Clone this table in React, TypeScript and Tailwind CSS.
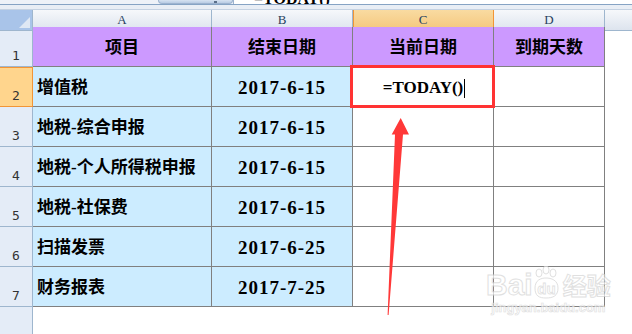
import React from 'react';

const cjk = '[font-family:"Liberation_Serif","Noto_Sans_CJK_SC",serif]';

const rows = [
  { name: '增值税', date: '2017-6-15' },
  { name: '地税-综合申报', date: '2017-6-15' },
  { name: '地税-个人所得税申报', date: '2017-6-15' },
  { name: '地税-社保费', date: '2017-6-15' },
  { name: '扫描发票', date: '2017-6-25' },
  { name: '财务报表', date: '2017-7-25' },
];

const gridCols = 'grid grid-cols-[33px_179px_141px_141px_111px_1fr]';

function RowHead({ n, active }: { n: number; active?: boolean }) {
  return (
    <div
      className={
        active
          ? 'flex items-end justify-center pb-[1px] bg-[#ffd58d] border-r border-b border-[#f29536] shadow-[inset_0_1px_0_#f29536] text-[13px] text-[#333] [font-family:"DejaVu_Sans_Mono",monospace]'
          : 'flex items-end justify-center pb-[1px] bg-[#e4ecf7] border-r border-b border-[#9eb6ce] text-[13px] text-[#333] [font-family:"DejaVu_Sans_Mono",monospace]'
      }
    >
      {n}
    </div>
  );
}

export default function App() {
  return (
    <div className="relative w-[632px] h-[334px] overflow-hidden bg-white">
      {/* formula bar remains */}
      <div className="flex h-[4px] bg-[#eef2f8] overflow-hidden">
        <div className="w-[158px]" />
        <div className="relative w-[75px] rounded-b-[6px] bg-gradient-to-b from-[#d6e2f1] to-[#b9cce4] border-x border-b border-[#9db3cf]">
          <div className="absolute left-[55px] bottom-0 w-[3px] h-[2px] bg-[#5a6f8a]" />
        </div>
        <div className="relative flex-1 overflow-hidden bg-white border-l border-[#9db3cf]">
          <div className={`absolute left-[20px] bottom-[0px] h-[16px] leading-[16px] text-[16px] font-bold text-black ${cjk}`}>
            <span className="relative top-[3px]">=TODAY()</span>
          </div>
        </div>
      </div>
      <div className="h-px bg-[#86a3c4]" />
      <div className="h-[4px] bg-[#e9eef5]" />

      {/* column headers */}
      <div className={`${gridCols} h-[18px] border-t border-[#c5d2e2]`}>
        <div className="relative bg-[#a9c4e9] border-r border-b border-[#9eb6ce]">
          <div className="absolute right-[2px] bottom-[2px] w-0 h-0 border-l-[11px] border-l-transparent border-b-[11px] border-b-[#dfe8f4]" />
        </div>
        {['A', 'B'].map((c) => (
          <div key={c} className="flex items-center justify-center bg-gradient-to-b from-[#f6f8fb] to-[#dde4ee] border-r border-b border-[#9eb6ce] text-[13px] text-[#27415f] [font-family:'Liberation_Serif',serif]">
            {c}
          </div>
        ))}
        <div className="flex items-center justify-center bg-gradient-to-b from-[#f9dba1] to-[#f4c77c] border-r border-b border-[#f29536] shadow-[inset_1px_0_0_#f29536] text-[13px] text-[#27415f] [font-family:'Liberation_Serif',serif]">
          C
        </div>
        <div className="flex items-center justify-center bg-gradient-to-b from-[#f6f8fb] to-[#dde4ee] border-r border-b border-[#9eb6ce] text-[13px] text-[#27415f] [font-family:'Liberation_Serif',serif]">
          D
        </div>
        <div className="bg-gradient-to-b from-[#f6f8fb] to-[#dde4ee] border-b border-[#9eb6ce]" />
      </div>

      {/* header row */}
      <div className={`${gridCols} h-[40px]`}>
        <RowHead n={1} />
        {['项目', '结束日期', '当前日期', '到期天数'].map((h) => (
          <div key={h} className={`flex items-center justify-center pt-[3px] bg-[#cc99ff] border-r border-b border-[#808080] text-[17px] font-bold text-black ${cjk}`}>
            {h}
          </div>
        ))}
        <div />
      </div>

      {/* data rows */}
      {rows.map((r, i) => (
        <div key={r.name} className={`${gridCols} h-[40px]`}>
          <RowHead n={i + 2} active={i === 0} />
          <div className={`flex items-center pl-[4px] pt-[3px] bg-[#ccecff] border-r border-b border-[#808080] text-[17px] font-bold text-black whitespace-nowrap ${cjk}`}>
            {r.name}
          </div>
          <div className={`flex items-center justify-center pt-[3px] bg-[#ccecff] border-r border-b border-[#808080] text-[19px] tracking-[1px] font-bold text-black ${cjk}`}>
            {r.date}
          </div>
          <div className={`flex items-center justify-center pt-[3px] pl-[2px] bg-white border-r border-b border-[#808080] text-[17px] font-bold text-black ${cjk}`}>
            {i === 0 && (
              <>
                <span>=TODAY()</span>
                <span className="ml-[1px] w-px h-[19px] bg-black" />
              </>
            )}
          </div>
          <div className="bg-white border-r border-b border-[#808080]" />
          <div />
        </div>
      ))}

      {/* empty area */}
      <div className={`${gridCols} h-[40px]`}>
        <div className="bg-[#e4ecf7] border-r border-[#9eb6ce]" />
      </div>

      {/* selection highlight */}
      <div className="absolute left-[350px] top-[65px] w-[145px] h-[43px] border-[3px] border-[#ff3333]" />

      {/* arrow */}
      <svg className="absolute left-0 top-0" width="632" height="334" viewBox="0 0 632 334">
        <polygon points="400.7,118 409,134.5 403,134.5 388.6,315 387.6,315 395,134.5 391.7,134.5" fill="#ff3838" />
      </svg>

      {/* watermark */}
      <div className="absolute left-[486px] top-[266px] flex flex-col items-center opacity-70 select-none">
        <div className="flex items-end">
          <span className="text-[30px] leading-[30px] font-bold text-white [-webkit-text-stroke:1px_#d4d4d4] [font-family:'Liberation_Sans',sans-serif]">Bai</span>
          <svg width="30" height="34" viewBox="0 0 30 34" className="-ml-[2px]">
            <g fill="white" stroke="#d4d4d4" strokeWidth="1">
              <ellipse cx="8" cy="7" rx="3" ry="4" />
              <ellipse cx="15" cy="4" rx="3" ry="4" />
              <ellipse cx="22" cy="7" rx="3" ry="4" />
              <path d="M4 22 C4 14 10 12 15 12 C20 12 27 14 27 22 C27 30 22 32 15 32 C8 32 4 30 4 22 Z" />
            </g>
            <text x="15.5" y="28" textAnchor="middle" fontSize="15" fontWeight="bold" fill="white" stroke="#d4d4d4" strokeWidth="0.8" fontFamily="Liberation Sans, sans-serif">du</text>
          </svg>
          <span className="ml-[2px] text-[24px] leading-[30px] font-bold text-white [-webkit-text-stroke:1px_#d4d4d4] [font-family:'Noto_Sans_CJK_SC',sans-serif]">经验</span>
        </div>
        <div className="mt-[1px] text-[13px] leading-[14px] font-bold text-white [-webkit-text-stroke:0.7px_#d4d4d4] [font-family:'Liberation_Sans',sans-serif]">
          jingyan.baidu.com
        </div>
      </div>
    </div>
  );
}
